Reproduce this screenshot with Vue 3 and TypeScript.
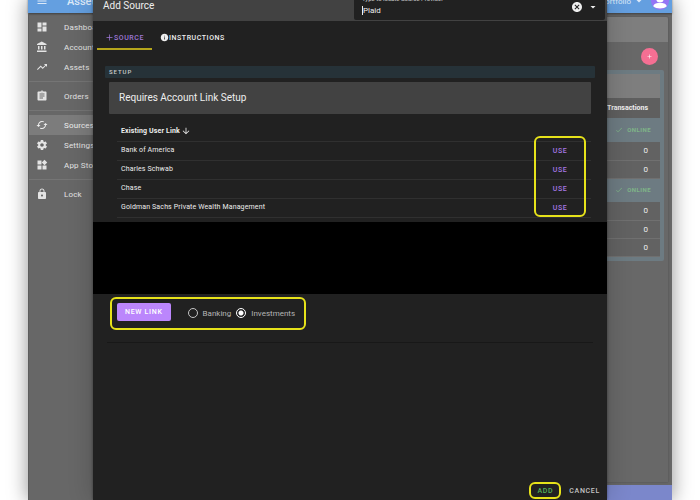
<script setup lang="ts">
import { ref } from 'vue'

interface NavItem {
  label: string
  icon: string
  active?: boolean
}

const nav: NavItem[][] = [
  [
    { label: 'Dashboard', icon: 'M3 13h8V3H3v10zm0 8h8v-6H3v6zm10 0h8V11h-8v10zm0-18v6h8V3h-8z' },
    { label: 'Accounts', icon: 'M4 10v7h3v-7H4zm6 0v7h3v-7h-3zM2 22h19v-3H2v3zm14-12v7h3v-7h-3zM11.500 1L2 6v2h19V6l-9.500-5z' },
    { label: 'Assets', icon: 'M16 6l2.290 2.290-4.880 4.880-4-4L2 16.590 3.410 18l6-6 4 4 6.300-6.290L22 12V6z' },
  ],
  [
    { label: 'Orders', icon: 'M19 3h-4.180C14.400 1.840 13.300 1 12 1c-1.300 0-2.400.84-2.820 2H5c-1.100 0-2 .9-2 2v14c0 1.100.9 2 2 2h14c1.100 0 2-.9 2-2V5c0-1.100-.9-2-2-2zm-7 0c.55 0 1 .45 1 1s-.45 1-1 1-1-.45-1-1 .45-1 1-1zm2 14H7v-2h7v2zm3-4H7v-2h10v2zm0-4H7V7h10v2z' },
  ],
  [
    { label: 'Sources', active: true, icon: 'M19 8l-4 4h3c0 3.310-2.690 6-6 6-1.010 0-1.970-.25-2.800-.7l-1.460 1.460C8.970 19.540 10.430 20 12 20c4.420 0 8-3.580 8-8h3l-4-4zM6 12c0-3.310 2.690-6 6-6 1.010 0 1.970.25 2.800.7l1.460-1.460C15.030 4.460 13.570 4 12 4c-4.420 0-8 3.580-8 8H1l4 4 4-4H6z' },
    { label: 'Settings', icon: 'M19.430 12.980c.04-.32.07-.64.07-.98s-.03-.66-.07-.98l2.110-1.650c.19-.15.24-.42.12-.64l-2-3.460c-.12-.22-.39-.3-.61-.22l-2.490 1c-.52-.4-1.080-.73-1.690-.98l-.38-2.650C14.460 2.180 14.250 2 14 2h-4c-.25 0-.46.18-.49.42l-.38 2.650c-.61.25-1.170.59-1.690.98l-2.490-1c-.23-.09-.49 0-.61.22l-2 3.460c-.13.22-.07.49.12.64l2.110 1.650c-.04.32-.07.65-.07.98s.03.66.07.98l-2.110 1.650c-.19.15-.24.42-.12.64l2 3.460c.12.22.39.3.61.22l2.490-1c.52.4 1.080.73 1.690.98l.38 2.650c.03.24.24.42.49.42h4c.25 0 .46-.18.49-.42l.38-2.650c.61-.25 1.170-.59 1.690-.98l2.490 1c.23.09.49 0 .61-.22l2-3.460c.12-.22.07-.49-.12-.64l-2.110-1.650zM12 15.500c-1.930 0-3.500-1.570-3.500-3.500s1.570-3.500 3.500-3.500 3.500 1.570 3.500 3.500-1.570 3.500-3.500 3.500z' },
    { label: 'App Store', icon: 'M3 3h8v8H3zM3 13h8v8H3zM13 13h8v8h-8zM17 1.500l5.500 5.500-5.500 5.500L11.500 7z' },
  ],
  [
    { label: 'Lock', icon: 'M18 8h-1V6c0-2.760-2.240-5-5-5S7 3.240 7 6v2H6c-1.100 0-2 .9-2 2v10c0 1.100.9 2 2 2h12c1.100 0 2-.9 2-2V10c0-1.100-.9-2-2-2zm-6 9c-1.100 0-2-.9-2-2s.9-2 2-2 2 .9 2 2-.9 2-2 2zm3.100-9H8.900V6c0-1.710 1.390-3.100 3.100-3.100s3.100 1.390 3.100 3.100v2z' },
  ],
]

const sourceGroups: number[][] = [[0, 0], [0, 0, 0]]

const userLinks = ['Bank of America', 'Charles Schwab', 'Chase', 'Goldman Sachs Private Wealth Management']

const provider = ref('Plaid')
const linkType = ref('investments')
</script>

<template>
  <div class="stage">
    <div class="app">
      <header class="appbar">
        <button class="plain menu" aria-label="Menu">
          <svg viewBox="0 0 24 24"><path d="M3 18h18v-2H3v2zm0-5h18v-2H3v2zm0-7v2h18V6H3z" /></svg>
        </button>
        <span class="brand">Assets</span>
        <button class="plain portfolio">
          Portfolio
          <svg viewBox="0 0 24 24"><path d="M7 10l5 5 5-5z" /></svg>
        </button>
        <svg class="avatar" viewBox="0 0 24 24">
          <circle cx="12" cy="12" r="12" fill="#9575f5" />
          <circle cx="12" cy="9" r="5" fill="#fff" />
          <path d="M3 19c1-4 5-4.500 9-4.500s8 .5 9 4.500c-4 4-14 4-18 0z" fill="#fff" />
        </svg>
      </header>

      <div class="body">
        <nav class="sidebar">
          <ul v-for="(group, g) in nav" :key="g">
            <li v-for="item in group" :key="item.label">
              <a href="#" :class="{ active: item.active }">
                <svg viewBox="0 0 24 24"><path :d="item.icon" /></svg>
                {{ item.label }}
              </a>
            </li>
          </ul>
        </nav>

        <div class="column">
          <main class="content">
            <div class="toolbar"></div>
            <div class="actions">
              <button class="fab" aria-label="Add">
                <svg viewBox="0 0 24 24"><path d="M19 13h-6v6h-2v-6H5v-2h6V5h2v6h6v2z" /></svg>
              </button>
            </div>
            <section class="sources">
              <div class="sources-head"></div>
              <table>
                <thead>
                  <tr><th>Transactions</th></tr>
                </thead>
                <tbody v-for="(group, g) in sourceGroups" :key="g">
                  <tr class="status">
                    <td>
                      <svg viewBox="0 0 24 24"><path d="M9 16.170L4.830 12l-1.420 1.410L9 19 21 7l-1.410-1.410z" /></svg>
                      ONLINE
                    </td>
                  </tr>
                  <tr v-for="(count, i) in group" :key="i" class="count"><td>{{ count }}</td></tr>
                </tbody>
              </table>
            </section>
          </main>
          <footer class="appfoot"></footer>
        </div>
      </div>
    </div>

    <div class="dialog" role="dialog" aria-labelledby="dialog-title">
      <header class="dialog-head">
        <h1 id="dialog-title">Add Source</h1>
        <div class="search">
          <div class="field">
            <label for="provider">Type to locate Source Provider</label>
            <div class="entry">
              <span class="caret"></span>
              <input id="provider" v-model="provider" type="text" />
            </div>
          </div>
          <button class="plain clear" aria-label="Clear">
            <svg viewBox="0 0 24 24"><path d="M12 2C6.470 2 2 6.470 2 12s4.470 10 10 10 10-4.470 10-10S17.530 2 12 2zm5 13.590L15.590 17 12 13.410 8.410 17 7 15.590 10.590 12 7 8.410 8.410 7 12 10.590 15.590 7 17 8.410 13.410 12 17 15.590z" /></svg>
          </button>
          <button class="plain drop" aria-label="Show providers">
            <svg viewBox="0 0 24 24"><path d="M7 10l5 5 5-5z" /></svg>
          </button>
        </div>
      </header>

      <div class="tabs" role="tablist">
        <button class="tab selected" role="tab" aria-selected="true">
          <svg viewBox="0 0 24 24"><path d="M20 13h-7v7h-2v-7H4v-2h7V4h2v7h7v2z" /></svg>
          SOURCE
        </button>
        <button class="tab" role="tab" aria-selected="false">
          <svg viewBox="0 0 24 24"><path d="M12 2C6.480 2 2 6.480 2 12s4.480 10 10 10 10-4.480 10-10S17.520 2 12 2zm1 15h-2v-6h2v6zm0-8h-2V7h2v2z" /></svg>
          INSTRUCTIONS
        </button>
      </div>

      <h2 class="setup">SETUP</h2>
      <div class="notice">Requires Account Link Setup</div>

      <div class="links">
        <table>
          <thead>
            <tr>
              <th colspan="2">
                Existing User Link
                <svg viewBox="0 0 24 24"><path d="M20 12l-1.410-1.410L13 16.170V4h-2v12.170l-5.580-5.590L4 12l8 8 8-8z" /></svg>
              </th>
            </tr>
          </thead>
          <tbody>
            <tr v-for="name in userLinks" :key="name">
              <td>{{ name }}</td>
              <td class="use"><button class="plain">USE</button></td>
            </tr>
          </tbody>
        </table>
        <div class="use-outline"></div>
      </div>

      <div class="blank"></div>

      <div class="new-link">
        <button class="primary">NEW LINK</button>
        <label><input v-model="linkType" type="radio" name="link-type" value="banking" />Banking</label>
        <label><input v-model="linkType" type="radio" name="link-type" value="investments" />Investments</label>
      </div>
      <hr />

      <footer class="dialog-foot">
        <button class="plain add">ADD</button>
        <button class="plain cancel">CANCEL</button>
      </footer>
    </div>
  </div>
</template>

<style>
body {
  margin: 0;
  background: #fff;
}
</style>

<style scoped>
* {
  box-sizing: border-box;
}
.stage {
  position: relative;
  height: 100vh;
  overflow: hidden;
  padding: 0 28px;
  font-family: Roboto, "Liberation Sans", sans-serif;
  font-size: 7px;
  color: #eee;
}
svg {
  width: 12px;
  height: 12px;
  flex: none;
  fill: currentColor;
}
button {
  font-family: inherit;
  color: inherit;
  cursor: pointer;
}
.plain {
  display: flex;
  align-items: center;
  padding: 0;
  border: 0;
  background: none;
}
table {
  width: 100%;
  border-collapse: collapse;
}
ul {
  margin: 0;
  padding: 0;
  list-style: none;
}

.app {
  display: flex;
  flex-direction: column;
  height: 100%;
  background: #676767;
  box-shadow: 0 0 18px 1px rgba(0, 0, 0, 0.4);
}
.appbar {
  display: flex;
  flex: none;
  align-items: center;
  height: 24px;
  margin-top: -11px;
  padding: 0 3px 0 8px;
  background: #649fe0;
  color: #dce9f8;
  box-shadow: 0 1px 2px rgba(0, 0, 0, 0.4);
}
.brand {
  flex: 1;
  padding-left: 19px;
  font-size: 11px;
  font-weight: 500;
}
.portfolio {
  gap: 2px;
  font-size: 8px;
}
.avatar {
  width: 18px;
  height: 18px;
  margin-left: 6px;
}
.body {
  display: flex;
  flex: 1;
  min-height: 0;
}
.sidebar {
  flex: none;
  width: 150px;
  padding-top: 4px;
  border-left: 1px solid #5c5c5c;
}
.sidebar ul + ul {
  margin-top: 4px;
  padding-top: 4px;
  border-top: 1px solid #757575;
}
.sidebar a {
  display: flex;
  align-items: center;
  gap: 16px;
  height: 20px;
  padding-left: 7px;
  color: #e4e4e4;
  font-size: 8px;
  letter-spacing: 0.02em;
  text-decoration: none;
}
.sidebar a.active {
  background: #7c7c7c;
  color: #eee;
}
.column {
  display: flex;
  flex: 1;
  flex-direction: column;
}
.content {
  flex: 1;
  margin: 4px 4px 3px 0;
  background: #686868;
  box-shadow: 0 0 2px #4c4c4c;
}
.toolbar {
  height: 25px;
  border-radius: 2px 2px 0 0;
  background: #7e7e7e;
}
.actions {
  display: flex;
  align-items: center;
  justify-content: flex-end;
  height: 28px;
  padding-right: 10px;
}
.fab {
  display: flex;
  align-items: center;
  justify-content: center;
  width: 17px;
  height: 17px;
  padding: 0;
  border: 0;
  border-radius: 50%;
  background: #f56f93;
  color: #fff;
}
.fab svg {
  width: 7px;
  height: 7px;
}
.sources {
  margin-right: 4px;
  padding: 4px;
  border-radius: 2px;
  background: #6d7b82;
}
.sources-head {
  height: 24px;
  background: #7e7e7e;
}
.sources th {
  height: 20px;
  padding: 0 12px;
  background: #5f5f5f;
  font-size: 7px;
  font-weight: 700;
  text-align: right;
}
.sources td {
  text-align: right;
}
.status td {
  height: 24px;
  padding: 0 9px;
  color: #7fb588;
  font-size: 6px;
  font-weight: 700;
  letter-spacing: 0.08em;
}
.status svg {
  width: 8px;
  height: 8px;
  margin-right: 2px;
  vertical-align: middle;
}
.count td {
  height: 18px;
  padding: 0 12px;
  border-bottom: 1px solid #707070;
  background: #626262;
  font-size: 8px;
}
.appfoot {
  flex: none;
  height: 15px;
  background: #7b87cb;
}

.dialog {
  position: absolute;
  inset: 0 93px;
  display: flex;
  flex-direction: column;
  background: #212121;
  box-shadow: 0 0 3px rgba(0, 0, 0, 0.4), 0 0 24px rgba(0, 0, 0, 0.2);
}
.dialog-head {
  display: flex;
  flex: none;
  align-items: center;
  justify-content: space-between;
  height: 32px;
  margin-top: -11px;
  padding: 0 2px 0 10px;
  background: #424242;
}
.dialog-head h1 {
  margin: 0;
  font-size: 10px;
  font-weight: 400;
}
.search {
  display: flex;
  align-items: center;
  gap: 4px;
  width: 50%;
  height: 30px;
  padding: 2px 6px 0 8px;
  border-radius: 2px;
  background: #212121;
}
.field {
  flex: 1;
  font-size: 6px;
  line-height: 8px;
}
.field label {
  display: block;
  color: #ccc;
}
.entry {
  display: flex;
  align-items: center;
  height: 14px;
}
.caret {
  width: 1px;
  height: 9px;
  background: #eee;
}
.entry input {
  flex: 1;
  min-width: 0;
  padding: 0;
  border: 0;
  outline: 0;
  background: none;
  color: #eee;
  font-family: inherit;
  font-size: 8px;
}
.search .plain {
  padding-top: 2px;
}
.tabs {
  display: flex;
  flex: none;
  height: 29px;
  padding-left: 4px;
}
.tab {
  display: flex;
  align-items: center;
  padding: 6px 8px 0;
  border: 0;
  border-bottom: 2px solid transparent;
  background: none;
  font-size: 7px;
  font-weight: 500;
  letter-spacing: 0.08em;
}
.tab svg {
  width: 9px;
  height: 9px;
}
.tab.selected {
  border-color: #b5a61c;
  color: #9f78d8;
}
.setup {
  flex: none;
  height: 12px;
  margin: 16px 12px 4px;
  padding-left: 4px;
  border-radius: 1px;
  background: #263238;
  color: #ccc;
  font-size: 6px;
  font-weight: 500;
  line-height: 12px;
  letter-spacing: 0.16em;
}
.notice {
  flex: none;
  margin: 0 16px;
  padding: 0 10px;
  border-radius: 1px;
  background: #424242;
  font-size: 10px;
  line-height: 32px;
}
.links {
  position: relative;
  flex: none;
  margin: 8px 16px 4px 24px;
}
.links th,
.links td {
  height: 19px;
  padding: 0 4px;
  border-bottom: 1px solid #303030;
  font-size: 7px;
  line-height: 9px;
  letter-spacing: 0.02em;
  text-align: left;
}
.links th {
  font-weight: 700;
}
.links th svg {
  width: 10px;
  height: 10px;
  margin-left: -1px;
  vertical-align: middle;
}
.links .use {
  width: 62px;
  padding: 0;
}
.use button {
  margin: 0 auto;
  color: #a678e6;
  font-size: 7px;
  font-weight: 500;
  letter-spacing: 0.08em;
}
.use-outline {
  position: absolute;
  top: 14px;
  right: 5px;
  bottom: 1px;
  width: 52px;
  border: 2px solid #e6e21a;
  border-radius: 6px;
  pointer-events: none;
}
.blank {
  flex: none;
  height: 72px;
  background: #000;
}
.new-link {
  display: flex;
  flex: none;
  align-items: center;
  align-self: flex-start;
  gap: 5px;
  height: 33px;
  margin: 3px 17px 12px;
  padding: 0 9px 2px 5px;
  border: 2px solid #e6e21a;
  border-radius: 6px;
  color: #b5b5b5;
  font-size: 8px;
}
.primary {
  height: 18px;
  margin-right: 12px;
  padding: 0 8px;
  border: 0;
  border-radius: 2px;
  background: #bb86fc;
  color: #fff;
  font-size: 7px;
  font-weight: 500;
  letter-spacing: 0.1em;
}
.new-link label {
  display: flex;
  align-items: center;
  gap: 5px;
  padding-top: 2px;
}
.new-link input {
  width: 10px;
  height: 10px;
  margin: 0;
  border: 1px solid #c4c4c4;
  border-radius: 50%;
  appearance: none;
}
.new-link input:checked {
  border-color: #fff;
  background: radial-gradient(circle, #fff 0 2px, transparent 3px);
}
hr {
  flex: none;
  width: calc(100% - 28px);
  height: 1px;
  margin: 0 auto;
  border: 0;
  background: #181818;
}
.dialog-foot {
  display: flex;
  align-items: center;
  justify-content: flex-end;
  gap: 8px;
  margin-top: auto;
  padding: 0 7px 1px 0;
}
.dialog-foot button {
  font-size: 7px;
  font-weight: 500;
  letter-spacing: 0.1em;
}
.dialog-foot .add {
  height: 17px;
  padding: 0 6px;
  border: 2px solid #e6e21a;
  border-radius: 6px;
  color: #55b259;
}
.dialog-foot .cancel {
  color: #c4c4c4;
}
</style>
